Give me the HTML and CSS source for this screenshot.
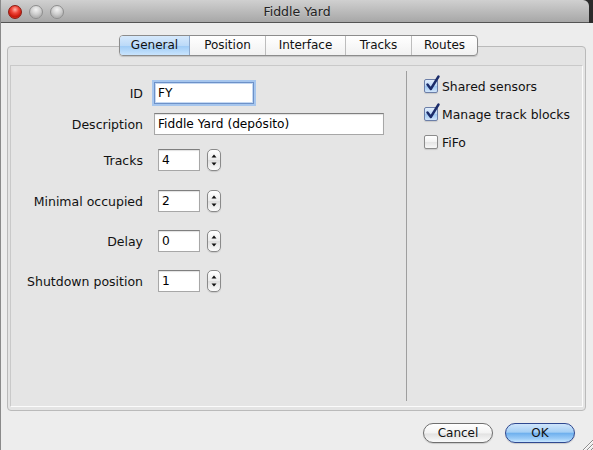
FILE: index.html
```html
<!DOCTYPE html>
<html>
<head>
<meta charset="utf-8">
<title>Fiddle Yard</title>
<link rel="stylesheet" href="styles.css">
</head>
<body>
<div class="window">
  <div class="titlebar">
    <div class="lights">
      <span class="light red"></span>
      <span class="light"></span>
      <span class="light"></span>
    </div>
    <div class="title">Fiddle Yard</div>
    <div></div>
  </div>
  <div class="content">
    <div class="tabs">
      <div class="tab active t-general">General</div>
      <div class="tab t-position">Position</div>
      <div class="tab t-interface">Interface</div>
      <div class="tab t-tracks">Tracks</div>
      <div class="tab t-routes">Routes</div>
    </div>
    <div class="tabbox">
      <div class="panel">
        <div class="form">
          <div class="row">
            <span class="label">ID</span>
            <span class="field focus w-id">FY</span>
          </div>
          <div class="row gap-desc">
            <span class="label">Description</span>
            <span class="field w-desc">Fiddle Yard (depósito)</span>
          </div>
          <div class="row gap-tracks">
            <span class="label">Tracks</span>
            <span class="field num">4</span>
            <span class="spinner"><svg width="12" height="20" viewBox="0 0 12 20"><path d="M3.5 7.5 L8.5 7.5 L6 4.5 Z" fill="#111"/><path d="M3.5 12.5 L8.5 12.5 L6 15.5 Z" fill="#111"/></svg></span>
          </div>
          <div class="row gap-next">
            <span class="label">Minimal occupied</span>
            <span class="field num">2</span>
            <span class="spinner"><svg width="12" height="20" viewBox="0 0 12 20"><path d="M3.5 7.5 L8.5 7.5 L6 4.5 Z" fill="#111"/><path d="M3.5 12.5 L8.5 12.5 L6 15.5 Z" fill="#111"/></svg></span>
          </div>
          <div class="row gap-rest">
            <span class="label">Delay</span>
            <span class="field num">0</span>
            <span class="spinner"><svg width="12" height="20" viewBox="0 0 12 20"><path d="M3.5 7.5 L8.5 7.5 L6 4.5 Z" fill="#111"/><path d="M3.5 12.5 L8.5 12.5 L6 15.5 Z" fill="#111"/></svg></span>
          </div>
          <div class="row gap-rest">
            <span class="label">Shutdown position</span>
            <span class="field num">1</span>
            <span class="spinner"><svg width="12" height="20" viewBox="0 0 12 20"><path d="M3.5 7.5 L8.5 7.5 L6 4.5 Z" fill="#111"/><path d="M3.5 12.5 L8.5 12.5 L6 15.5 Z" fill="#111"/></svg></span>
          </div>
        </div>
        <div class="divider"></div>
        <div class="checks">
          <div class="check">
            <span class="box checked"><svg class="tick" width="16" height="17" viewBox="0 0 16 17"><path d="M2.5 9.5 L5.8 14 L13.5 1.5" stroke="#1b2c6a" stroke-width="2.4" fill="none" stroke-linecap="round" stroke-linejoin="round"/></svg></span>
            <span class="ctext">Shared sensors</span>
          </div>
          <div class="check">
            <span class="box checked"><svg class="tick" width="16" height="17" viewBox="0 0 16 17"><path d="M2.5 9.5 L5.8 14 L13.5 1.5" stroke="#1b2c6a" stroke-width="2.4" fill="none" stroke-linecap="round" stroke-linejoin="round"/></svg></span>
            <span class="ctext">Manage track blocks</span>
          </div>
          <div class="check">
            <span class="box"></span>
            <span class="ctext">FiFo</span>
          </div>
        </div>
      </div>
    </div>
    <div class="buttons">
      <button class="btn">Cancel</button>
      <button class="btn default">OK</button>
    </div>
  </div>
  <div class="grip"><svg width="11" height="11" viewBox="0 0 11 11"><path d="M1 11 L11 1 M5 11 L11 5 M9 11 L11 9" stroke="#8d8d8d" stroke-width="1" fill="none"/><path d="M2 11 L11 2 M6 11 L11 6" stroke="#fff" stroke-width="0.8" fill="none"/></svg></div>
</div>
</body>
</html>
```

FILE: styles.css
```css
* { box-sizing: border-box; }
html, body { margin: 0; padding: 0; }
body {
  width: 593px;
  height: 450px;
  overflow: hidden;
  background: #2b2b2b;
  font-family: "DejaVu Sans", "Lucida Grande", sans-serif;
  font-size: 12.5px;
  color: #000;
}
.window {
  position: relative;
  width: 593px;
  height: 450px;
  display: flex;
  flex-direction: column;
  border-left: 1px solid #8a8a8a;
}
.titlebar {
  height: 23px;
  margin-right: 4px;
  padding-left: 4px;
  border-top-right-radius: 6px;
  background: linear-gradient(#d0d0d0, #a7a7a7);
  border-bottom: 1px solid #545454;
  display: grid;
  grid-template-columns: 1fr auto 1fr;
  align-items: center;
}
.lights {
  display: flex;
  gap: 7px;
  margin-left: 3px;
  padding-top: 1px;
}
.light {
  width: 14px;
  height: 14px;
  border-radius: 50%;
  border: 1px solid #8e8e8e;
  background: radial-gradient(circle at 50% 30%, #f3f3f3 0%, #cfcfcf 45%, #b1b1b1 75%, #d8d8d8 100%);
}
.light.red {
  border-color: #8c1b12;
  background: radial-gradient(circle at 50% 30%, #ffb3a8 0%, #f0473a 35%, #c81709 70%, #f06a55 100%);
}
.title {
  font-size: 12.5px;
  color: #222;
  text-shadow: 0 1px 0 rgba(255,255,255,0.35);
}
.content {
  flex: 1;
  background: #ededed;
  padding: 12px 7px 0 6px;
  display: flex;
  flex-direction: column;
}
.tabs {
  align-self: center;
  margin-left: 4px;
  display: flex;
  height: 21px;
  margin-bottom: -10px;
  position: relative;
  z-index: 1;
  border: 1px solid #8c8c8c;
  border-radius: 4px;
  background: linear-gradient(#ffffff, #f1f1f1);
  box-shadow: 0 1px 1px rgba(0,0,0,0.15);
  overflow: hidden;
}
.tab {
  font-size: 12px;
  line-height: 19px;
  text-align: center;
  color: #111;
  border-left: 1px solid #bdbdbd;
}
.tab:first-child { border-left: none; }
.tab.active {
  background: linear-gradient(#d6e9fc 0%, #bcdaf8 50%, #9ecbf6 52%, #c9e4fd 100%);
  border-right: 1px solid #8ea9cc;
}
.tab.active + .tab { border-left: none; }
.t-general { width: 70px; }
.t-position { width: 75px; }
.t-interface { width: 80px; }
.t-tracks { width: 66px; }
.t-routes { width: 66px; }
.tabbox {
  height: 365px;
  border: 1px solid #bababa;
  border-radius: 4px;
  background: #e4e4e4;
  padding: 18px 2px 3px 2px;
}
.panel {
  height: 100%;
  display: flex;
  background: #e5e5e5;
  border: 1px solid;
  border-color: #c9c9c9 #fbfbfb #fbfbfb #c9c9c9;
}
.form {
  width: 395px;
  padding-top: 16px;
  display: flex;
  flex-direction: column;
}
.row {
  display: flex;
  align-items: center;
  height: 22px;
}
.gap-desc { margin-top: 9px; }
.gap-tracks { margin-top: 14px; }
.gap-next { margin-top: 19px; }
.gap-rest { margin-top: 18px; }
.label {
  width: 132px;
  text-align: right;
  color: #111;
}
.field {
  height: 22px;
  margin-left: 11px;
  background: #fff;
  border: 1px solid #a7a7a7;
  border-top-color: #7f7f7f;
  box-shadow: inset 0 1px 1px rgba(0,0,0,0.12);
  font-size: 12.2px;
  line-height: 20px;
  padding-left: 3px;
  color: #000;
}
.field.focus {
  border-color: #6d91c8;
  box-shadow: 0 0 0 2px #a6c6ee, inset 0 0 0 1px #c5d9f3;
}
.w-id { width: 100px; }
.w-desc { width: 230px; }
.field.num {
  width: 42px;
  margin-left: 15px;
}
.spinner {
  width: 14px;
  height: 22px;
  margin-left: 7px;
  border: 1px solid #8a8a8a;
  border-radius: 5px;
  background: linear-gradient(#ffffff, #ececec 50%, #dedede 51%, #fbfbfb);
  box-shadow: 0 1px 1px rgba(0,0,0,0.12);
  display: flex;
}
.divider {
  width: 1px;
  background: #9e9e9e;
  margin: 5px 0 5px 0;
}
.checks {
  flex: 1;
  padding: 11px 0 0 17px;
  display: flex;
  flex-direction: column;
  gap: 10px;
}
.check {
  height: 18px;
  display: flex;
  align-items: center;
}
.box {
  position: relative;
  width: 14px;
  height: 14px;
  border: 1px solid #8b8b8b;
  border-radius: 2px;
  background: linear-gradient(#ffffff, #f2f2f2 50%, #e4e4e4 51%, #f7f7f7);
  box-shadow: 0 1px 1px rgba(0,0,0,0.12);
}
.box.checked {
  border-color: #6c7fa8;
  background: linear-gradient(#e2eefc, #bcd7f6 50%, #9cc6f2 51%, #d2e6fb);
}
.tick {
  position: absolute;
  left: 0px;
  top: -5px;
}
.ctext {
  margin-left: 4px;
  font-size: 12.4px;
  color: #111;
}
.buttons {
  display: flex;
  justify-content: flex-end;
  gap: 12px;
  margin-top: 12px;
  margin-right: 11px;
}
.btn {
  width: 70px;
  height: 20px;
  border-radius: 10px;
  border: 1px solid #6f6f6f;
  background: linear-gradient(#ffffff, #f3f3f3 50%, #e2e2e2 55%, #fafafa);
  font-family: "DejaVu Sans", "Lucida Grande", sans-serif;
  font-size: 12px;
  color: #111;
  padding: 0;
  line-height: 18px;
  box-shadow: 0 1px 1px rgba(0,0,0,0.15);
}
.btn.default {
  border-color: #2f4890;
  background: linear-gradient(#cfe5fb 0%, #a5cff5 45%, #6fb0ee 52%, #99cbf7 80%, #c7e6ff 100%);
}
.grip {
  position: absolute;
  right: 0;
  bottom: 0;
  width: 11px;
  height: 11px;
  display: flex;
}
```
